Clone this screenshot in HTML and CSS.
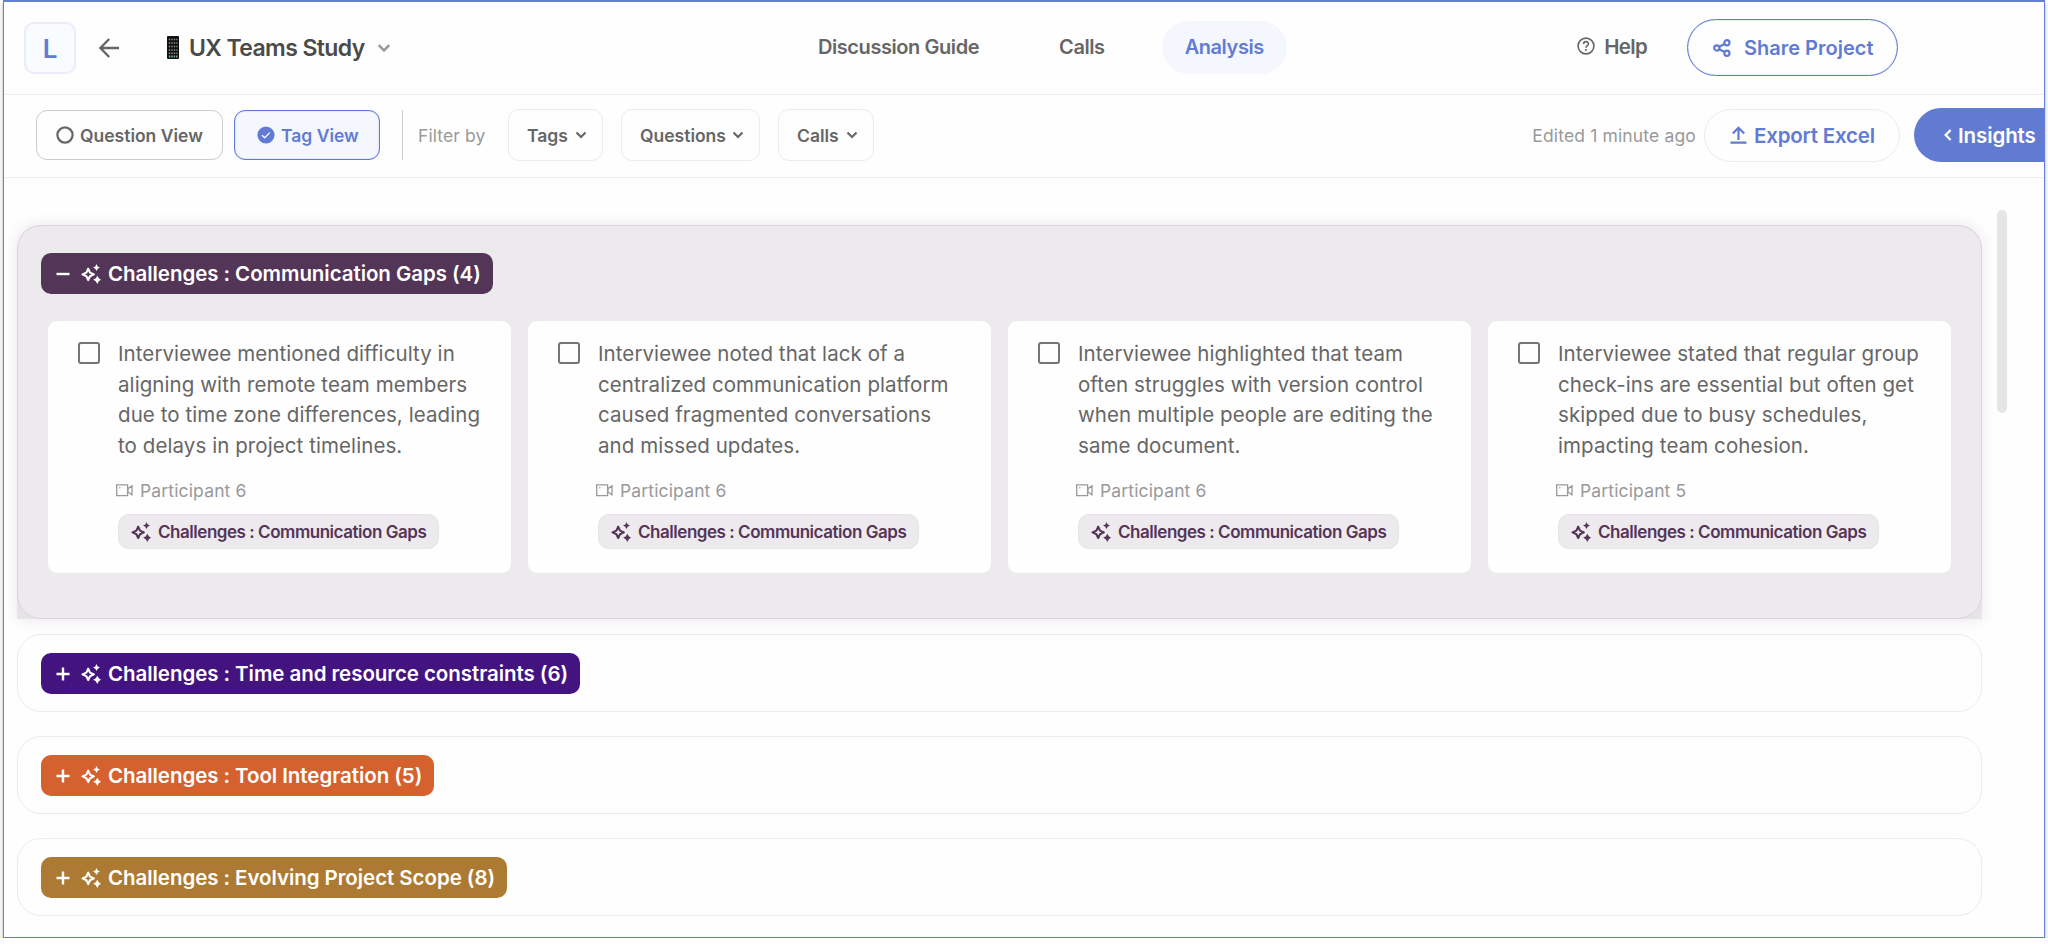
FILE: index.html
```html
<!DOCTYPE html>
<html lang="en">
<head>
    <meta charset="UTF-8">
    <meta name="viewport" content="width=device-width, initial-scale=1.0">
    <title>UX Teams Study - Analysis</title>
    <link rel="stylesheet" href="styles.css">
</head>
<body>
    <!-- Shared icons -->
    <svg class="sprite">
        <symbol id="sparkles" viewBox="0 0 20 20">
            <path d="M7.2 4.7 L9 8.6 L12.9 10.4 L9 12.2 L7.2 16.1 L5.4 12.2 L1.5 10.4 L5.4 8.6 Z" fill="none" stroke="currentColor" stroke-width="2.1" stroke-linejoin="round"/>
            <path d="M15.5 0.1 L16.7 2.4 L19 3.6 L16.7 4.8 L15.5 7.1 L14.3 4.8 L12 3.6 L14.3 2.4 Z" fill="currentColor"/>
            <path d="M16.3 11.7 L17.8 14.3 L20 15.8 L17.8 17.3 L16.3 19.9 L14.8 17.3 L12.2 15.8 L14.8 14.3 Z" fill="currentColor"/>
        </symbol>
        <symbol id="chevron" viewBox="0 0 12 8">
            <path d="M1.5 1.5 L6 6 L10.5 1.5" fill="none" stroke="currentColor" stroke-width="2.2"/>
        </symbol>
        <symbol id="video" viewBox="0 0 17 13">
            <path d="M0.7 0.9 H11.6 V11.6 H0.7 Z M16 1.8 V10.8 L12 8 V4.6 Z" fill="none" stroke="currentColor" stroke-width="1.3"/>
            <circle cx="3.8" cy="3.8" r="0.8" fill="currentColor"/>
        </symbol>
        <symbol id="plus" viewBox="0 0 14 14">
            <path d="M0.5 7 H13.5 M7 0.5 V13.5" fill="none" stroke="currentColor" stroke-width="2.4"/>
        </symbol>
        <symbol id="minus" viewBox="0 0 14 14">
            <path d="M0.5 7 H13.5" fill="none" stroke="currentColor" stroke-width="2.4"/>
        </symbol>
    </svg>

    <div class="app">
        <!-- Header -->
        <header class="header">
            <div class="header-left">
                <div class="logo">L</div>
                <svg class="back" viewBox="0 0 20 20"><path d="M10.2 1 L1.4 10 L10.2 19 M1.4 10 H20" fill="none" stroke="currentColor" stroke-width="2.4"/></svg>
                <svg class="phone" viewBox="0 0 12 23">
                    <rect width="12" height="23" rx="1" fill="#111"/>
                    <path d="M1.8 3.5 H10.5 M1.8 7 H10.5 M1.8 10.5 H10.5 M1.8 14 H10.5 M1.8 17.2 H10.5" stroke="#8b8f8c" stroke-width="1.4" stroke-dasharray="1.4 1.1"/>
                    <path d="M1.8 20.5 H10.5" stroke="#7fae92" stroke-width="1.8" stroke-dasharray="1.5 0.9"/>
                </svg>
                <h1 class="title">UX Teams Study</h1>
                <svg class="title-chevron"><use href="#chevron"/></svg>
            </div>
            <nav class="nav">
                <a class="nav-item">Discussion Guide</a>
                <a class="nav-item">Calls</a>
                <a class="nav-item active">Analysis</a>
            </nav>
            <div class="header-right">
                <div class="help">
                    <svg viewBox="0 0 18 18" fill="none" stroke="currentColor">
                        <circle cx="9" cy="9" r="7.9" stroke-width="1.6"/>
                        <path d="M6.6 7 C6.6 3.9 11.4 3.9 11.4 6.9 C11.4 8.7 9 8.7 9 10.7" stroke-width="1.6"/>
                        <path d="M9 12 V13.7" stroke-width="1.8"/>
                    </svg>
                    <span>Help</span>
                </div>
                <button class="share">
                    <svg viewBox="0 0 18 18" fill="none" stroke="currentColor" stroke-width="2.2">
                        <circle cx="3.8" cy="9" r="2.6"/>
                        <circle cx="13.9" cy="3.8" r="2.6"/>
                        <circle cx="13.9" cy="14.2" r="2.6"/>
                        <path d="M6.2 7.8 L11.5 5 M6.2 10.2 L11.5 13"/>
                    </svg>
                    <span>Share Project</span>
                </button>
            </div>
        </header>

        <!-- Toolbar -->
        <div class="toolbar">
            <button class="view-btn question">
                <svg viewBox="0 0 18 18"><circle cx="9" cy="9" r="7.6" fill="none" stroke="currentColor" stroke-width="2.2"/></svg>
                <span>Question View</span>
            </button>
            <button class="view-btn tag-view active">
                <svg viewBox="0 0 18 18"><circle cx="9" cy="9" r="8.6" fill="currentColor"/><path d="M5 9.2 L7.7 11.8 L12.8 6.6" fill="none" stroke="#fff" stroke-width="1.3"/></svg>
                <span>Tag View</span>
            </button>
            <div class="divider"></div>
            <span class="filter-label">Filter by</span>
            <button class="filter tags">Tags <svg><use href="#chevron"/></svg></button>
            <button class="filter questions">Questions <svg><use href="#chevron"/></svg></button>
            <button class="filter calls">Calls <svg><use href="#chevron"/></svg></button>
            <span class="edited">Edited 1 minute ago</span>
            <button class="export">
                <svg viewBox="0 0 17 18" fill="none" stroke="currentColor" stroke-width="2.2"><path d="M8.5 14 V2 M2.8 7.6 L8.5 1.8 L14.2 7.6 M0.5 16.7 H16.5"/></svg>
                <span>Export Excel</span>
            </button>
            <button class="insights">
                <svg viewBox="0 0 8 12"><path d="M6.6 1 L1.7 6 L6.6 11" fill="none" stroke="currentColor" stroke-width="2.3"/></svg>
                <span>Insights</span>
            </button>
        </div>

        <!-- Tag groups -->
        <main class="content">
            <div class="groups">
                <div class="group-open-wrap">
                    <section class="group open">
                        <div class="chip purple"><svg class="toggle"><use href="#minus"/></svg><svg class="sparkles"><use href="#sparkles"/></svg><span>Challenges : Communication Gaps (4)</span></div>
                        <div class="cards">
                            <article class="card">
                                <span class="checkbox"></span>
                                <div class="card-body">
                                    <p>Interviewee mentioned difficulty in<br>aligning with remote team members<br>due to time zone differences, leading<br>to delays in project timelines.</p>
                                    <div class="participant"><svg><use href="#video"/></svg>Participant 6</div>
                                    <div class="tag"><svg><use href="#sparkles"/></svg>Challenges : Communication Gaps</div>
                                </div>
                            </article>
                            <article class="card">
                                <span class="checkbox"></span>
                                <div class="card-body">
                                    <p>Interviewee noted that lack of a<br>centralized communication platform<br>caused fragmented conversations<br>and missed updates.</p>
                                    <div class="participant"><svg><use href="#video"/></svg>Participant 6</div>
                                    <div class="tag"><svg><use href="#sparkles"/></svg>Challenges : Communication Gaps</div>
                                </div>
                            </article>
                            <article class="card">
                                <span class="checkbox"></span>
                                <div class="card-body">
                                    <p>Interviewee highlighted that team<br>often struggles with version control<br>when multiple people are editing the<br>same document.</p>
                                    <div class="participant"><svg><use href="#video"/></svg>Participant 6</div>
                                    <div class="tag"><svg><use href="#sparkles"/></svg>Challenges : Communication Gaps</div>
                                </div>
                            </article>
                            <article class="card">
                                <span class="checkbox"></span>
                                <div class="card-body">
                                    <p>Interviewee stated that regular group<br>check-ins are essential but often get<br>skipped due to busy schedules,<br>impacting team cohesion.</p>
                                    <div class="participant"><svg><use href="#video"/></svg>Participant 5</div>
                                    <div class="tag"><svg><use href="#sparkles"/></svg>Challenges : Communication Gaps</div>
                                </div>
                            </article>
                        </div>
                    </section>
                </div>
                <section class="group">
                    <div class="chip indigo"><svg class="toggle"><use href="#plus"/></svg><svg class="sparkles"><use href="#sparkles"/></svg><span>Challenges : Time and resource constraints (6)</span></div>
                </section>
                <section class="group">
                    <div class="chip orange"><svg class="toggle"><use href="#plus"/></svg><svg class="sparkles"><use href="#sparkles"/></svg><span>Challenges : Tool Integration (5)</span></div>
                </section>
                <section class="group">
                    <div class="chip brown"><svg class="toggle"><use href="#plus"/></svg><svg class="sparkles"><use href="#sparkles"/></svg><span>Challenges : Evolving Project Scope (8)</span></div>
                </section>
            </div>
            <div class="scrollbar"></div>
        </main>
    </div>
</body>
</html>
```
FILE: styles.css
```css
/* General styles */
* {
    margin: 0;
    padding: 0;
    box-sizing: border-box;
}

body {
    font-family: Inter, sans-serif;
    color: #666;
    background: #fff;
    overflow: hidden;
}

button {
    font: inherit;
    color: inherit;
    background: none;
    border: none;
}

svg {
    display: block;
    flex-shrink: 0;
}

.sprite {
    display: none;
}

.app {
    width: 2042px;
    height: 938px;
    margin-left: 3px;
    border: 1px solid #6580d2;
    border-top-width: 2px;
    background: #fefefe;
    box-shadow: 0 3px 4px rgba(0, 0, 0, 0.3);
    overflow: hidden;
}

/* Header */
.header {
    display: flex;
    align-items: center;
    height: 93px;
    padding: 0 146px 1px 20px;
    border-bottom: 1px solid #ececec;
}

.header-left {
    display: flex;
    align-items: center;
    width: 771px;
}

.logo {
    width: 52px;
    height: 52px;
    border: 2px solid #ebebf9;
    border-radius: 10px;
    background: #f8fbff;
    color: #627bd2;
    font-size: 26px;
    font-weight: 600;
    line-height: 49px;
    text-align: center;
}

.back {
    width: 20px;
    height: 20px;
    margin-left: 23px;
}

.phone {
    width: 12px;
    height: 23px;
    margin-left: 48px;
}

.title {
    margin-left: 10px;
    color: #4a4a4a;
    font-size: 23px;
    font-weight: 600;
    letter-spacing: -0.6px;
}

.title-chevron {
    width: 14px;
    height: 10px;
    margin-left: 12px;
    color: #999;
}

.nav {
    display: flex;
    gap: 34px;
}

.nav-item {
    height: 53px;
    padding: 0 23px;
    border-radius: 27px;
    font-size: 20px;
    font-weight: 600;
    line-height: 53px;
    letter-spacing: -0.43px;
}

.nav-item.active {
    background: #f5f7fe;
    color: #627bd2;
}

.header-right {
    display: flex;
    align-items: center;
    gap: 40px;
    margin-left: auto;
}

.help {
    display: flex;
    align-items: center;
    gap: 9px;
    margin-top: -3px;
    font-size: 20.5px;
    font-weight: 600;
    letter-spacing: -0.7px;
}

.help svg {
    width: 18px;
    height: 18px;
}

.share {
    display: flex;
    align-items: center;
    gap: 13px;
    width: 211px;
    height: 57px;
    padding-left: 25px;
    border: 1px solid #627bd2;
    border-radius: 29px;
    box-shadow: inset 0 0 1px #627bd2;
    color: #627bd2;
    font-size: 20px;
    font-weight: 600;
}

.share svg {
    width: 18px;
    height: 18px;
}

/* Toolbar */
.toolbar {
    display: flex;
    align-items: center;
    height: 83px;
    padding: 0 0 2px 32px;
    border-bottom: 1px solid #ececec;
    font-size: 17.5px;
}

.view-btn {
    display: flex;
    align-items: center;
    gap: 6px;
    height: 50px;
    border: 1px solid #ccc;
    border-radius: 11px;
    font-weight: 600;
}

.view-btn svg {
    width: 18px;
    height: 18px;
}

.question {
    width: 187px;
    padding-left: 19px;
}

.tag-view {
    width: 146px;
    margin-left: 11px;
    padding-left: 22px;
}

.view-btn.active {
    border-color: #627bd2;
    background: #f4f7fe;
    box-shadow: inset 0 0 1px #627bd2;
    color: #627bd2;
}

.divider {
    width: 1px;
    height: 50px;
    margin: 0 15px 0 22px;
    background: #ccc;
}

.filter-label {
    width: 90px;
    color: #999;
    letter-spacing: 0.1px;
}

.filter {
    display: flex;
    align-items: center;
    justify-content: space-between;
    height: 52px;
    padding: 0 15px 0 18px;
    border: 1px solid #ececec;
    border-radius: 11px;
    font-weight: 600;
}

.filter svg {
    width: 12px;
    height: 8px;
}

.tags {
    width: 95px;
}

.questions {
    width: 139px;
    margin-left: 18px;
}

.calls {
    width: 96px;
    margin-left: 18px;
}

.edited {
    margin-left: auto;
    margin-right: 8px;
    color: #999;
    letter-spacing: 0.15px;
}

.export {
    display: flex;
    align-items: center;
    gap: 7px;
    width: 196px;
    height: 53px;
    padding-left: 25px;
    border: 1px solid #ececec;
    border-radius: 27px;
    color: #627bd2;
    font-size: 20.5px;
    font-weight: 600;
    letter-spacing: -0.2px;
}

.export svg {
    width: 17px;
    height: 18px;
}

.insights {
    display: flex;
    align-items: center;
    gap: 6px;
    width: 130px;
    height: 54px;
    margin-left: 14px;
    padding-left: 30px;
    border-radius: 27px 0 0 27px;
    background: #627bd2;
    color: #fff;
    font-size: 20.5px;
    font-weight: 600;
    letter-spacing: -0.1px;
}

.insights svg {
    width: 8px;
    height: 12px;
}

/* Content */
.content {
    display: flex;
    gap: 15px;
    padding: 32px 0 0 13px;
}

.groups {
    width: 1965px;
    padding-top: 15px;
}

.scrollbar {
    width: 10px;
    height: 203px;
    border-radius: 5px;
    background: #e5e5e5;
}

.group {
    height: 78px;
    margin-bottom: 24px;
    padding: 18px 23px;
    border: 1px solid #ececec;
    border-radius: 24px;
}

/* Shade left visible under the bottom corners of the open group */
.group-open-wrap {
    margin-bottom: 15px;
    border-radius: 24px 24px 0 0;
    background: #e6e4e7;
    box-shadow: 0 0 14px rgba(83, 53, 88, 0.12);
}

.group.open {
    height: 394px;
    margin-bottom: 0;
    padding: 27px 23px 0;
    border-color: #dcd4db;
    background: #edeaed;
}

.chip {
    display: flex;
    align-items: center;
    width: max-content;
    height: 41px;
    padding: 0 12px 0 15px;
    border-radius: 10px;
    color: #fff;
    font-size: 20.5px;
    font-weight: 600;
    letter-spacing: -0.06px;
    line-height: 24px;
    white-space: nowrap;
}

.chip .toggle {
    width: 14px;
    height: 14px;
}

.chip .sparkles {
    width: 20px;
    height: 20px;
    margin: 0 7px 0 11px;
}

.purple {
    background: #533558;
}

.indigo {
    background: #43147f;
}

.orange {
    background: #d4612e;
}

.brown {
    background: #ad7a33;
}

/* Cards */
.cards {
    display: grid;
    grid-template-columns: repeat(4, 463px);
    gap: 17px;
    margin: 27px 0 0 7px;
}

.card {
    display: flex;
    height: 252px;
    padding: 18px 0 0 30px;
    border-radius: 9px;
    background: #fefefe;
}

.checkbox {
    width: 22px;
    height: 22px;
    margin-top: 3px;
    border: 2px solid #757575;
    border-radius: 3px;
}

.card-body {
    margin-left: 18px;
}

.card p {
    font-size: 20.5px;
    line-height: 30.7px;
    letter-spacing: 0.08px;
    white-space: nowrap;
}

.participant {
    display: flex;
    align-items: center;
    gap: 7px;
    height: 24px;
    margin: 17px 0 0 -2px;
    color: #999;
    font-size: 17.5px;
    letter-spacing: 0.15px;
}

.participant svg {
    width: 17px;
    height: 13px;
}

.tag {
    display: flex;
    align-items: center;
    gap: 7px;
    width: 321px;
    height: 35px;
    margin-top: 11px;
    padding: 1px 0 0 12px;
    border: 1px solid #e6e4e7;
    border-radius: 11px;
    background: #edeaed;
    color: #533558;
    font-size: 17px;
    font-weight: 600;
    letter-spacing: -0.46px;
    white-space: nowrap;
}

.tag svg {
    width: 20px;
    height: 20px;
}
```
